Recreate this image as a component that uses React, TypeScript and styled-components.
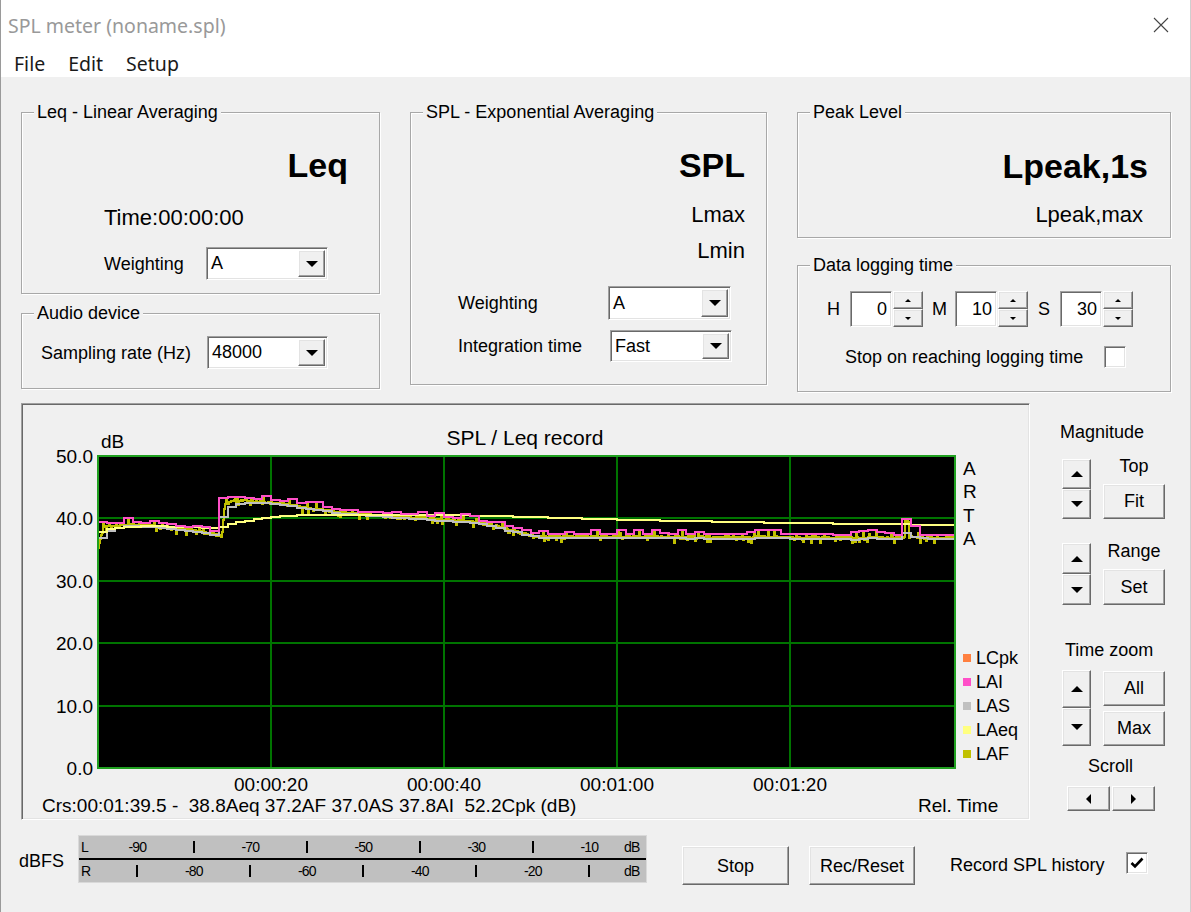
import React from 'react';
import styled, { createGlobalStyle, css } from 'styled-components';

const UI_FONT = `"Liberation Sans", Arial, sans-serif`;
const SYS_FONT = `"Noto Sans", "Open Sans", sans-serif`;

const GlobalStyle = createGlobalStyle`
  html, body { margin: 0; padding: 0; background: #f0f0f0; }
  body { font-family: ${UI_FONT}; font-size: 18px; color: #000; }
`;

const raised = css`
  box-sizing: border-box;
  background: #f0f0f0;
  border: 1px solid;
  border-color: #fff #696969 #696969 #fff;
  box-shadow: inset -1px -1px 0 #a0a0a0, inset 1px 1px 0 #e3e3e3;
`;

const sunken = css`
  box-sizing: border-box;
  border: 1px solid;
  border-color: #a0a0a0 #fff #fff #a0a0a0;
  box-shadow: inset 1px 1px 0 #696969, inset -1px -1px 0 #e3e3e3;
`;

const Window = styled.div`
  box-sizing: border-box;
  width: 1191px;
  height: 912px;
  display: flex;
  flex-direction: column;
  background: #f0f0f0;
  border-left: 1px solid #9a9a9a;
  border-right: 1px solid #cfcfcf;
  overflow: hidden;
`;

const TitleBar = styled.div`
  height: 50px;
  flex: none;
  display: flex;
  align-items: center;
  justify-content: space-between;
  padding-left: 7px;
  background: #fff;
`;

const TitleText = styled.span`
  font-family: ${SYS_FONT};
  font-size: 19.5px;
  color: #999;
`;

const CloseBox = styled.div`
  width: 58px;
  height: 50px;
  display: flex;
  align-items: center;
  justify-content: center;
`;

const MenuBar = styled.div`
  height: 27px;
  flex: none;
  display: flex;
  align-items: center;
  gap: 23px;
  padding-left: 13px;
  background: #fff;
  font-family: ${SYS_FONT};
  font-size: 19.5px;
  color: #1a1a1a;
`;

const Body = styled.div`
  padding: 24px 0 0 20px;
`;

const TopRow = styled.div`
  display: grid;
  grid-template-columns: 359px 357px 374px;
  column-gap: 30px;
  align-items: start;
`;

const Column = styled.div<{ $gap: number }>`
  display: flex;
  flex-direction: column;
  gap: ${p => p.$gap}px;
`;

const GroupFrame = styled.div<{ $h: number; $pad: string }>`
  position: relative;
  box-sizing: border-box;
  height: ${p => p.$h}px;
  margin-top: 11px;
  padding: ${p => p.$pad};
  display: flex;
  flex-direction: column;
  border: 1px solid #a8a8a8;
  box-shadow: inset 1px 1px 0 #fff, 1px 1px 0 #fff;
`;

const Caption = styled.span`
  position: absolute;
  top: -12px;
  left: 12px;
  padding: 0 3px;
  line-height: 22px;
  white-space: nowrap;
  background: #f0f0f0;
`;

const BigReading = styled.div`
  font-weight: bold;
  font-size: 34px;
  line-height: 40px;
  text-align: right;
`;

const Reading = styled.div<{ $mt: number; $align?: 'left' | 'right'; $mr?: number }>`
  margin-top: ${p => p.$mt}px;
  margin-right: ${p => p.$mr ?? 0}px;
  font-size: 22px;
  line-height: 26px;
  text-align: ${p => p.$align ?? 'right'};
`;

const FieldRow = styled.div<{ $mt: number }>`
  display: flex;
  align-items: center;
  margin-top: ${p => p.$mt}px;
`;

const FieldLabel = styled.span<{ $w: number }>`
  width: ${p => p.$w}px;
  flex: none;
  line-height: 22px;
  white-space: nowrap;
`;

const ComboFrame = styled.div<{ $w: number; $h: number }>`
  ${sunken};
  width: ${p => p.$w}px;
  height: ${p => p.$h}px;
  padding: 2px;
  display: flex;
  background: #fff;
`;

const ComboValue = styled.span`
  flex: 1;
  display: flex;
  align-items: center;
  padding-left: 2px;
`;

const ComboButton = styled.span`
  ${raised};
  width: 27px;
  display: flex;
  align-items: center;
  justify-content: center;
`;

const Arrow = styled.span<{ $dir: 'up' | 'down' | 'left' | 'right'; $s: number }>`
  width: 0;
  height: 0;
  border-style: solid;
  border-color: transparent;
  ${p => {
    const s = p.$s;
    switch (p.$dir) {
      case 'up':
        return css`border-width: 0 ${s}px ${s}px; border-bottom-color: #000;`;
      case 'down':
        return css`border-width: ${s}px ${s}px 0; border-top-color: #000;`;
      case 'left':
        return css`border-width: ${s}px ${s}px ${s}px 0; border-right-color: #000;`;
      default:
        return css`border-width: ${s}px 0 ${s}px ${s}px; border-left-color: #000;`;
    }
  }}
`;

const SpinLabel = styled.span<{ $ml: number }>`
  margin-left: ${p => p.$ml}px;
  line-height: 22px;
`;

const SpinEdit = styled.div<{ $ml: number }>`
  ${sunken};
  margin-left: ${p => p.$ml}px;
  width: 42px;
  height: 36px;
  padding-right: 4px;
  display: flex;
  align-items: center;
  justify-content: flex-end;
  background: #fff;
`;

const SpinPair = styled.div`
  display: flex;
  flex-direction: column;
  margin-left: 1px;
`;

const SpinButton = styled.div<{ $w: number; $h: number }>`
  ${raised};
  width: ${p => p.$w}px;
  height: ${p => p.$h}px;
  display: flex;
  align-items: center;
  justify-content: center;
`;

const CheckBox = styled.div<{ $ml: number }>`
  ${sunken};
  margin-left: ${p => p.$ml}px;
  width: 22px;
  height: 22px;
  flex: none;
  display: flex;
  align-items: center;
  justify-content: center;
  background: #fff;
`;

const MiddleRow = styled.div`
  display: flex;
  margin-top: 11px;
`;

const ChartPanel = styled.div`
  ${sunken};
  width: 1009px;
  height: 417px;
  flex: none;
  background: #f0f0f0;

  svg {
    display: block;
  }
`;

const SidePanel = styled.div`
  display: flex;
  flex-direction: column;
  padding: 18px 0 0 30px;
`;

const SideTitle = styled.div<{ $indent: number; $mt: number }>`
  margin-top: ${p => p.$mt}px;
  padding-left: ${p => p.$indent}px;
  line-height: 22px;
`;

const ControlGroup = styled.div<{ $mt: number }>`
  display: flex;
  align-items: flex-end;
  gap: 12px;
  margin-top: ${p => p.$mt}px;
  padding-left: 2px;
`;

const SpinStack = styled.div`
  display: flex;
  flex-direction: column;
`;

const ButtonStack = styled.div<{ $gap: number }>`
  width: 62px;
  display: flex;
  flex-direction: column;
  align-items: center;
  gap: ${p => p.$gap}px;
`;

const PushButton = styled.div<{ $w: number; $h: number }>`
  ${raised};
  width: ${p => p.$w}px;
  height: ${p => p.$h}px;
  display: flex;
  align-items: center;
  justify-content: center;
  flex: none;
`;

const ScrollRow = styled.div`
  display: flex;
  gap: 2px;
  margin-top: 9px;
  padding-left: 7px;
`;

const BottomBar = styled.div`
  display: flex;
  align-items: flex-start;
  padding-left: 18px;
`;

const BottomItem = styled.div<{ $ml: number; $mt: number }>`
  margin-left: ${p => p.$ml}px;
  margin-top: ${p => p.$mt}px;
  line-height: 22px;
  display: flex;
`;

const Meter = styled.div`
  box-sizing: border-box;
  width: 569px;
  height: 48px;
  display: flex;
  flex-direction: column;
  background: #c0c0c0;
  border: 1px solid #d9d9d9;
`;

const MeterRow = styled.div`
  flex: 1;
  display: grid;
  grid-template-columns: 30px repeat(9, 56.5px) 1fr;
  align-items: center;
  justify-items: center;
  font-size: 14px;
  letter-spacing: -0.9px;
`;

const MeterDivider = styled.div`
  height: 2px;
  background: #000;
`;

const MeterSide = styled.span`
  justify-self: start;
  padding-left: 2px;
`;

const MeterTick = styled.span`
  width: 2px;
  height: 12px;
  background: #000;
`;

/* ---------- chart data ---------- */

const SEC_PX = 173 / 20;
const DB_PX = 312 / 50;
const PX0 = 98;
const PX1 = 955;
const PY_TOP = 456;
const PY_BOT = 768;
const DURATION = (PX1 - PX0) / SEC_PX;
const xOf = (t: number) => PX0 + t * SEC_PX;
const yOf = (db: number) => PY_BOT - db * DB_PX;

const PROFILE: [number, number][] = [
  [0, 35.5], [0.6, 38.8], [4, 39.1], [7, 38.9], [10, 38.4], [13, 37.7], [14.3, 37.2],
  [14.6, 42.2], [15.8, 43.1], [17.5, 42.9], [22, 42.3], [25, 41.6], [28.5, 41.0],
  [33, 40.5], [38, 40.1], [43, 39.6], [46, 38.9], [48.5, 37.9], [50.5, 37.2], [99.2, 37.0],
];

function level(t: number) {
  for (let i = 1; i < PROFILE.length; i++) {
    const [t1, v1] = PROFILE[i];
    if (t <= t1) {
      const [t0, v0] = PROFILE[i - 1];
      return v0 + ((v1 - v0) * (t - t0)) / (t1 - t0);
    }
  }
  return PROFILE[PROFILE.length - 1][1];
}

function mulberry32(seed: number) {
  let a = seed;
  return () => {
    a |= 0;
    a = (a + 0x6d2b79f5) | 0;
    let t = Math.imul(a ^ (a >>> 15), 1 | a);
    t = (t + Math.imul(t ^ (t >>> 7), 61 | t)) ^ t;
    return ((t ^ (t >>> 14)) >>> 0) / 4294967296;
  };
}

const toE = (db: number) => Math.pow(10, db / 10);
const toDb = (e: number) => 10 * Math.log10(e);

function buildTraces() {
  const rand = mulberry32(917);
  const n = PX1 - PX0 + 1;
  const dt = 1 / SEC_PX;
  const laf: number[] = [];
  for (let i = 0; i < n; i++) {
    const t = i * dt;
    let v = level(t) - 0.1 + (rand() - 0.5) * 0.3;
    if (rand() < 0.16) v -= rand() * 0.9;
    if (rand() < 0.05) v += 0.4 + rand() * 0.4;
    if (t > 93.2 && t < 93.7) v += 2.6;
    laf.push(v);
  }

  let eSlow = toE(33);
  let imp = 30;
  let eSum = 0;
  const a = 1 - Math.exp(-dt);
  const slow: number[] = [];
  const impulse: number[] = [];
  const leq: number[] = [];
  laf.forEach((v, i) => {
    eSlow += (toE(v) - eSlow) * a;
    imp = Math.max(v, imp - 2.9 * dt);
    eSum += toE(v);
    slow.push(toDb(eSlow));
    impulse.push(imp);
    leq.push(toDb(eSum / (i + 1)));
  });

  // readings are held for one second each
  const held = (pick: (from: number, to: number) => number) => {
    let d = '';
    const count = Math.ceil(DURATION);
    for (let k = 0; k < count; k++) {
      const from = Math.round(k * SEC_PX);
      const to = Math.min(n - 1, Math.round((k + 1) * SEC_PX));
      const y = Math.round(yOf(pick(from, to)));
      d += k === 0 ? `M${PX0 + from} ${y}` : `V${y}`;
      d += `H${PX0 + to}`;
    }
    return d;
  };

  let lafPath = `M${PX0} ${Math.round(yOf(laf[0]))}`;
  for (let i = 1; i < n; i++) lafPath += `H${PX0 + i}V${Math.round(yOf(laf[i]))}`;

  return {
    laf: lafPath,
    las: held((_, to) => slow[to] - 0.2),
    lai: held((from, to) => Math.max(...impulse.slice(from, to + 1)) + 0.35),
    leq: held((_, to) => leq[to]),
  };
}

const TRACES = buildTraces();

const LEGEND = [
  { name: 'LCpk', color: '#ff8040' },
  { name: 'LAI', color: '#ff50c8' },
  { name: 'LAS', color: '#c0c0c0' },
  { name: 'LAeq', color: '#ffff80' },
  { name: 'LAF', color: '#c0c000' },
];

const Y_TICKS = [50, 40, 30, 20, 10, 0];
const X_TICKS = ['00:00:20', '00:00:40', '00:01:00', '00:01:20'];

const RecordChart: React.FC = () => (
  <svg width={1007} height={415} viewBox="22 404 1007 415" fontFamily={UI_FONT} fill="#000">
    <defs>
      <clipPath id="plotClip">
        <rect x={PX0} y={PY_TOP} width={PX1 - PX0} height={PY_BOT - PY_TOP} />
      </clipPath>
    </defs>
    <text x={525} y={445} fontSize={21} textAnchor="middle">SPL / Leq record</text>
    <text x={101} y={448} fontSize={19}>dB</text>
    {Y_TICKS.map(v => (
      <text key={v} x={93} y={yOf(v) + 7} fontSize={19} textAnchor="end">{v.toFixed(1)}</text>
    ))}
    <rect x={PX0} y={PY_TOP} width={PX1 - PX0} height={PY_BOT - PY_TOP} fill="#000" />
    <g stroke="#007400" strokeWidth={2} shapeRendering="crispEdges">
      {[1, 2, 3, 4].map(k => (
        <line key={`v${k}`} x1={PX0 + 173 * k} y1={PY_TOP} x2={PX0 + 173 * k} y2={PY_BOT} />
      ))}
      {[10, 20, 30, 40].map(v => (
        <line key={`h${v}`} x1={PX0} y1={Math.round(yOf(v))} x2={PX1} y2={Math.round(yOf(v))} />
      ))}
    </g>
    <g clipPath="url(#plotClip)" fill="none" strokeWidth={2}>
      <path d={TRACES.laf} stroke="#c0c000" />
      <path d={TRACES.las} stroke="#c0c0c0" />
      <path d={TRACES.leq} stroke="#ffff80" />
      <path d={TRACES.lai} stroke="#ff50c8" />
    </g>
    <rect x={PX0} y={PY_TOP} width={PX1 - PX0} height={PY_BOT - PY_TOP} fill="none"
      stroke="#20a020" strokeWidth={2} shapeRendering="crispEdges" />
    {X_TICKS.map((label, k) => (
      <text key={label} x={PX0 + 173 * (k + 1)} y={791} fontSize={19} textAnchor="middle">{label}</text>
    ))}
    <g fontSize={19}>
      {['A', 'R', 'T', 'A'].map((ch, i) => (
        <text key={i} x={963} y={[475, 498, 522, 545][i]}>{ch}</text>
      ))}
    </g>
    <g fontSize={18}>
      {LEGEND.map((item, i) => (
        <g key={item.name}>
          <rect x={963} y={654 + i * 24} width={8} height={8} fill={item.color} />
          <text x={976} y={664 + i * 24}>{item.name}</text>
        </g>
      ))}
    </g>
    <text x={42} y={812} fontSize={19} xmlSpace="preserve">
      {'Crs:00:01:39.5 -  38.8Aeq 37.2AF 37.0AS 37.8AI  52.2Cpk (dB)'}
    </text>
    <text x={918} y={812} fontSize={19}>Rel. Time</text>
  </svg>
);

/* ---------- small widgets ---------- */

const Combo: React.FC<{ value: string; w: number; h: number }> = ({ value, w, h }) => (
  <ComboFrame $w={w} $h={h}>
    <ComboValue>{value}</ComboValue>
    <ComboButton>
      <Arrow $dir="down" $s={6} />
    </ComboButton>
  </ComboFrame>
);

const Group: React.FC<{ title: string; h: number; pad: string; children: React.ReactNode }> = ({
  title, h, pad, children,
}) => (
  <GroupFrame $h={h} $pad={pad}>
    <Caption>{title}</Caption>
    {children}
  </GroupFrame>
);

const TimeSpin: React.FC<{ label: string; value: string; labelMl: number; editMl: number }> = ({
  label, value, labelMl, editMl,
}) => (
  <>
    <SpinLabel $ml={labelMl}>{label}</SpinLabel>
    <SpinEdit $ml={editMl}>{value}</SpinEdit>
    <SpinPair>
      <SpinButton $w={30} $h={18}><Arrow $dir="up" $s={3} /></SpinButton>
      <SpinButton $w={30} $h={18}><Arrow $dir="down" $s={3} /></SpinButton>
    </SpinPair>
  </>
);

const UpDown: React.FC<{ h: number }> = ({ h }) => (
  <SpinStack>
    <SpinButton $w={29} $h={h}><Arrow $dir="up" $s={6} /></SpinButton>
    <SpinButton $w={29} $h={h}><Arrow $dir="down" $s={6} /></SpinButton>
  </SpinStack>
);

const Check: React.FC = () => (
  <svg width="14" height="12" viewBox="0 0 14 12">
    <polyline points="1.5,6 5,9.5 12.5,1.5" fill="none" stroke="#000" strokeWidth="2.6" />
  </svg>
);

const METER_L = ['-90', '|', '-70', '|', '-50', '|', '-30', '|', '-10'];
const METER_R = ['|', '-80', '|', '-60', '|', '-40', '|', '-20', '|'];

const MeterLine: React.FC<{ side: string; cells: string[] }> = ({ side, cells }) => (
  <MeterRow>
    <MeterSide>{side}</MeterSide>
    {cells.map((c, i) => (c === '|' ? <MeterTick key={i} /> : <span key={i}>{c}</span>))}
    <span>dB</span>
  </MeterRow>
);

export default function App() {
  return (
    <>
      <GlobalStyle />
      <Window>
        <TitleBar>
          <TitleText>SPL meter (noname.spl)</TitleText>
          <CloseBox>
            <svg width="16" height="16" viewBox="0 0 16 16">
              <path d="M1 1L15 15M15 1L1 15" stroke="#444" strokeWidth="1.1" />
            </svg>
          </CloseBox>
        </TitleBar>
        <MenuBar>
          <span>File</span>
          <span>Edit</span>
          <span>Setup</span>
        </MenuBar>

        <Body>
          <TopRow>
            <Column $gap={8}>
              <Group title="Leq - Linear Averaging" h={182} pad="32px 31px 0 82px">
                <BigReading>Leq</BigReading>
                <Reading $mt={20} $align="left">Time:00:00:00</Reading>
                <FieldRow $mt={16}>
                  <FieldLabel $w={102}>Weighting</FieldLabel>
                  <Combo value="A" w={122} h={33} />
                </FieldRow>
              </Group>
              <Group title="Audio device" h={76} pad="22px 0 0 19px">
                <FieldRow $mt={0}>
                  <FieldLabel $w={166}>Sampling rate (Hz)</FieldLabel>
                  <Combo value="48000" w={121} h={33} />
                </FieldRow>
              </Group>
            </Column>

            <Column $gap={0}>
              <Group title="SPL - Exponential Averaging" h={273} pad="32px 21px 0 47px">
                <BigReading>SPL</BigReading>
                <Reading $mt={17}>Lmax</Reading>
                <Reading $mt={10}>Lmin</Reading>
                <FieldRow $mt={22}>
                  <FieldLabel $w={150}>Weighting</FieldLabel>
                  <Combo value="A" w={123} h={34} />
                </FieldRow>
                <FieldRow $mt={10}>
                  <FieldLabel $w={152}>Integration time</FieldLabel>
                  <Combo value="Fast" w={122} h={32} />
                </FieldRow>
              </Group>
            </Column>

            <Column $gap={16}>
              <Group title="Peak Level" h={126} pad="33px 22px 0 0">
                <BigReading>Lpeak,1s</BigReading>
                <Reading $mt={16} $mr={5}>Lpeak,max</Reading>
              </Group>
              <Group title="Data logging time" h={127} pad="25px 0 0 29px">
                <FieldRow $mt={0}>
                  <TimeSpin label="H" value="0" labelMl={0} editMl={10} />
                  <TimeSpin label="M" value="10" labelMl={9} editMl={8} />
                  <TimeSpin label="S" value="30" labelMl={10} editMl={10} />
                </FieldRow>
                <FieldRow $mt={19}>
                  <SpinLabel $ml={18}>Stop on reaching logging time</SpinLabel>
                  <CheckBox $ml={21} />
                </FieldRow>
              </Group>
            </Column>
          </TopRow>

          <MiddleRow>
            <ChartPanel>
              <RecordChart />
            </ChartPanel>
            <SidePanel>
              <SideTitle $indent={0} $mt={0}>Magnitude</SideTitle>
              <ControlGroup $mt={13}>
                <UpDown h={30} />
                <ButtonStack $gap={7}>
                  <span>Top</span>
                  <PushButton $w={62} $h={35}>Fit</PushButton>
                </ButtonStack>
              </ControlGroup>
              <ControlGroup $mt={22}>
                <UpDown h={31} />
                <ButtonStack $gap={7}>
                  <span>Range</span>
                  <PushButton $w={62} $h={36}>Set</PushButton>
                </ButtonStack>
              </ControlGroup>
              <SideTitle $indent={5} $mt={34}>Time zoom</SideTitle>
              <ControlGroup $mt={9}>
                <UpDown h={38} />
                <ButtonStack $gap={5}>
                  <PushButton $w={62} $h={35}>All</PushButton>
                  <PushButton $w={62} $h={35}>Max</PushButton>
                </ButtonStack>
              </ControlGroup>
              <SideTitle $indent={28} $mt={9}>Scroll</SideTitle>
              <ScrollRow>
                <SpinButton $w={43} $h={25}><Arrow $dir="left" $s={5} /></SpinButton>
                <SpinButton $w={43} $h={25}><Arrow $dir="right" $s={5} /></SpinButton>
              </ScrollRow>
            </SidePanel>
          </MiddleRow>
        </Body>

        <BottomBar>
          <BottomItem $ml={0} $mt={30}>dBFS</BottomItem>
          <BottomItem $ml={14} $mt={15}>
            <Meter>
              <MeterLine side="L" cells={METER_L} />
              <MeterDivider />
              <MeterLine side="R" cells={METER_R} />
            </Meter>
          </BottomItem>
          <BottomItem $ml={35} $mt={26}>
            <PushButton $w={107} $h={39}>Stop</PushButton>
          </BottomItem>
          <BottomItem $ml={20} $mt={26}>
            <PushButton $w={106} $h={39}>Rec/Reset</PushButton>
          </BottomItem>
          <BottomItem $ml={35} $mt={34}>Record SPL history</BottomItem>
          <BottomItem $ml={22} $mt={32}>
            <CheckBox $ml={0}><Check /></CheckBox>
          </BottomItem>
        </BottomBar>
      </Window>
    </>
  );
}
